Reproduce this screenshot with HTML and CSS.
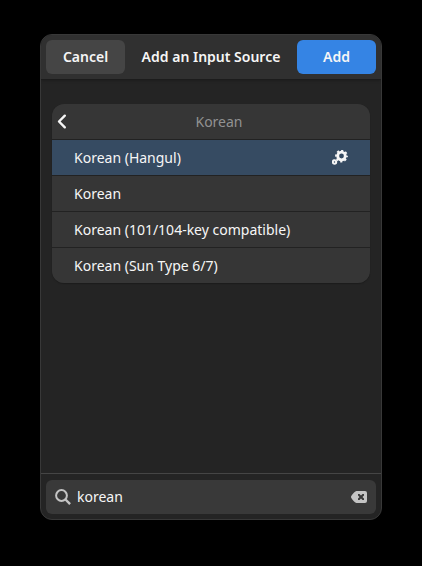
FILE: index.html
```html
<!DOCTYPE html>
<html lang="en">
<head>
<meta charset="utf-8">
<meta name="viewport" content="width=device-width, initial-scale=1">
<title>Add an Input Source</title>
<link rel="stylesheet" href="styles.css">
</head>
<body>
<main class="dialog">
  <header class="header">
    <button class="button" type="button">Cancel</button>
    <h1 class="title">Add an Input Source</h1>
    <button class="button suggested" type="button">Add</button>
  </header>
  <section class="content">
    <ul class="list">
      <li>
        <button class="row back" type="button">
          <svg class="icon" viewBox="0 0 16 16" aria-hidden="true"><path d="M8.8 1.700 3 7.500l5.800 5.800" fill="none" stroke="currentColor" stroke-width="2.4" stroke-linecap="round" stroke-linejoin="round"/></svg>
          <span class="back-label">Korean</span>
        </button>
      </li>
      <li>
        <button class="row selected" type="button">
          <span>Korean (Hangul)</span>
          <svg class="icon" viewBox="0 0 16 16" aria-hidden="true">
            <circle cx="9.5" cy="6" r="3.8" fill="none" stroke="currentColor" stroke-width="2.8"/>
            <circle cx="9.5" cy="6" r="5.5" fill="none" stroke="currentColor" stroke-width="1.8" stroke-dasharray="2.2 2.12" stroke-dashoffset="1.1"/>
            <circle cx="2.5" cy="12" r="1.7" fill="none" stroke="currentColor" stroke-width="2"/>
          </svg>
        </button>
      </li>
      <li><button class="row" type="button">Korean</button></li>
      <li><button class="row" type="button">Korean (101/104-key compatible)</button></li>
      <li><button class="row" type="button">Korean (Sun Type 6/7)</button></li>
    </ul>
  </section>
  <footer class="footer">
    <div class="search">
      <svg class="icon" viewBox="0 0 16 16" aria-hidden="true"><circle cx="6.5" cy="6.5" r="5.4" fill="none" stroke="currentColor" stroke-width="2"/><path d="m10.5 10.5 4.6 4.6" stroke="currentColor" stroke-width="2.4"/></svg>
      <input class="search-input" type="text" aria-label="Search input sources" value="korean">
      <button class="clear" type="button" aria-label="Clear search">
        <svg class="icon" viewBox="0 0 16 16" aria-hidden="true"><path fill="currentColor" fill-rule="evenodd" d="M5.5 2H14a2 2 0 0 1 2 2v8a2 2 0 0 1-2 2H5.5C4 14 0 9.5 0 8s4-6 5.5-6zM7 5v1.500L8.500 8 7 9.500V11h1.500L10 9.500l1.500 1.500H13V9.500L11.500 8 13 6.500V5h-1.500L10 6.500 8.500 5z"/></svg>
      </button>
    </div>
  </footer>
</main>
</body>
</html>
```
FILE: styles.css
```css
* {
  box-sizing: border-box;
}

body {
  display: flex;
  min-height: 100vh;
  margin: 0;
  padding: 34px 40px 46px;
  background: #000;
  color: #f6f6f6;
  font: 14px/20px "Noto Sans", "Open Sans", sans-serif;
}

button,
input {
  margin: 0;
  border: 0;
  color: inherit;
  font: inherit;
}

.dialog {
  display: flex;
  flex: 1;
  flex-direction: column;
  min-width: 0;
  overflow: hidden;
  border: 1px solid #383838;
  border-radius: 12px;
  background: #242424;
}

.header {
  display: flex;
  align-items: center;
  justify-content: space-between;
  padding: 5px;
  border-bottom: 1px solid #1c1c1c;
  background: #303030;
  box-shadow: 0 1px 2px #1e1e1e;
}

.title {
  margin: 0;
  font-size: 14px;
  font-weight: 600;
  white-space: nowrap;
}

.button {
  width: 79px;
  height: 34px;
  padding: 0;
  border-radius: 6px;
  background: #454545;
  font-weight: 600;
}

.suggested {
  background: #3584e4;
}

.content {
  flex: 1;
  padding: 24px 11px;
}

.list {
  display: grid;
  gap: 1px;
  margin: 0;
  padding: 0;
  overflow: hidden;
  border-radius: 12px;
  background: #222;
  list-style: none;
  box-shadow: 0 1px 1px #1c1c1c;
}

.row {
  display: flex;
  align-items: center;
  justify-content: space-between;
  width: 100%;
  height: 35px;
  padding: 0 22px;
  background: #363636;
  text-align: left;
}

.selected {
  background: #364b62;
}

.back {
  padding: 0 4px;
}

.back-label {
  flex: 1;
  color: #929292;
  text-align: center;
}

.icon {
  display: block;
  flex: none;
  width: 16px;
  height: 16px;
}

.footer {
  padding: 6px 5px 5px;
  border-top: 1px solid #454545;
}

.search {
  display: flex;
  align-items: center;
  gap: 6px;
  height: 34px;
  padding: 0 9px;
  border-radius: 6px;
  background: #393939;
  color: #c4c4c4;
}

.search-input {
  flex: 1;
  min-width: 0;
  padding: 0;
  outline: 0;
  background: transparent;
  color: #f6f6f6;
}

.clear {
  padding: 0;
  background: transparent;
}
```
